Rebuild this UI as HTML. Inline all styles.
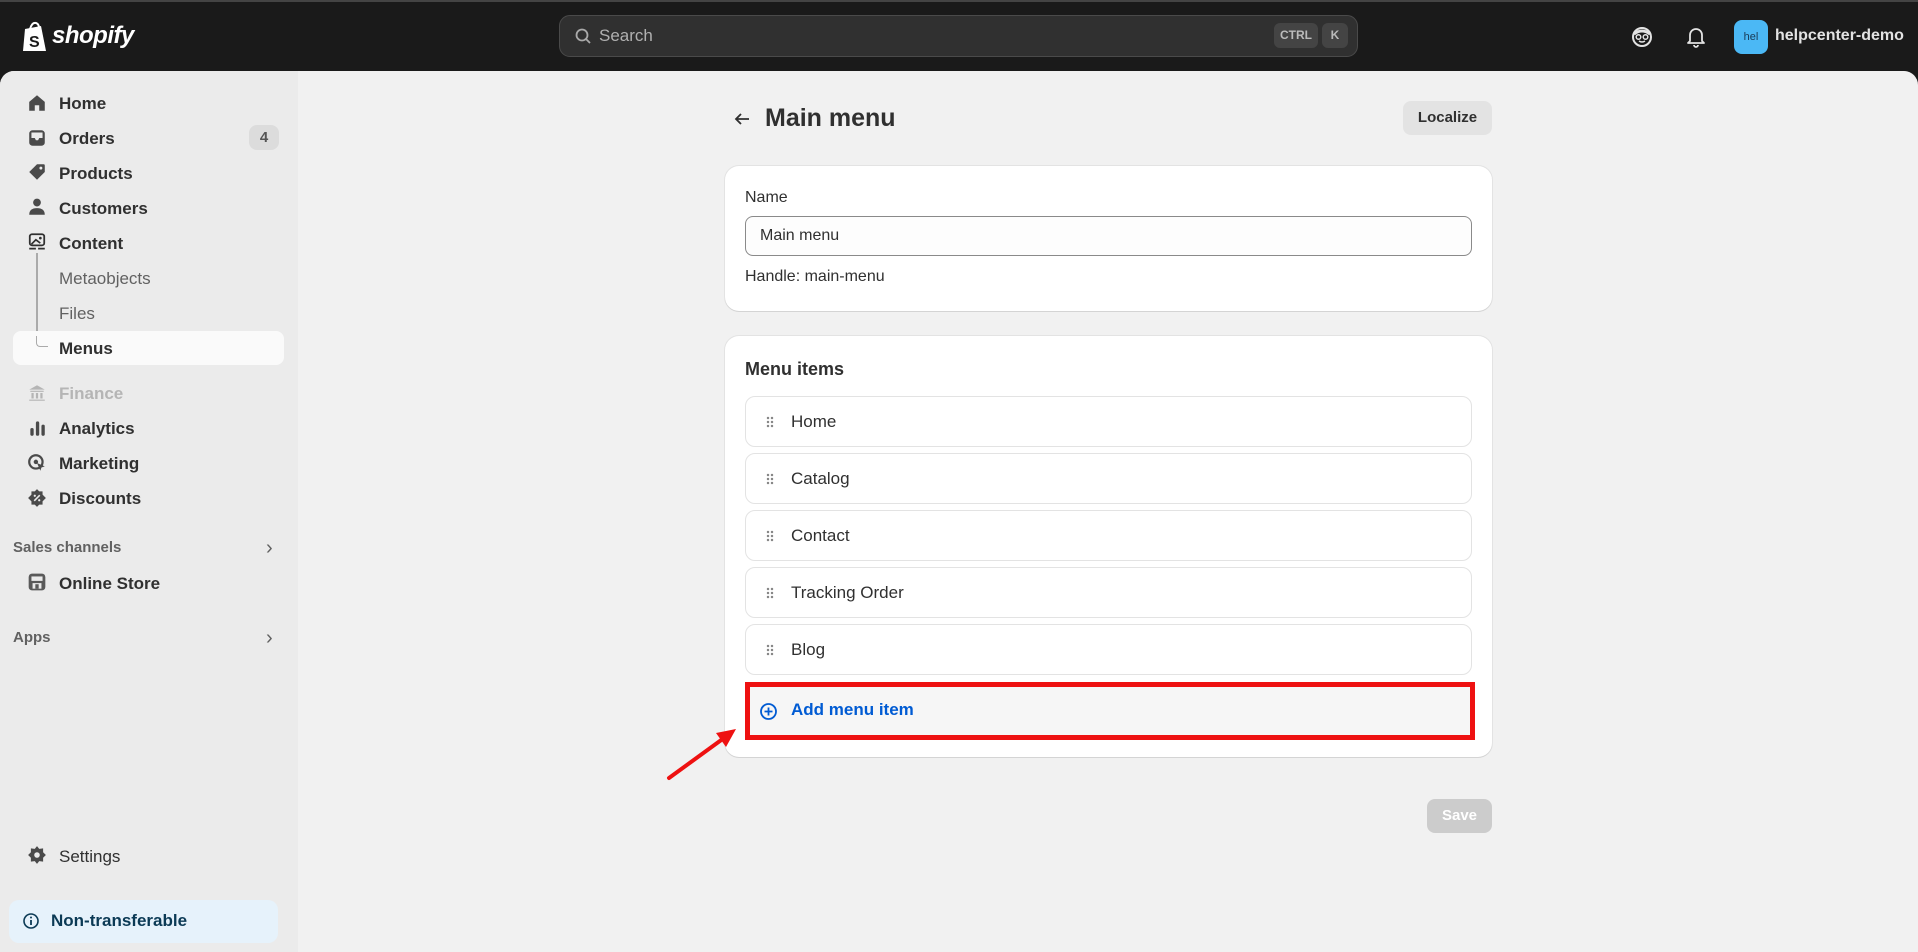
<!DOCTYPE html>
<html><head><meta charset="utf-8"><style>
*{box-sizing:border-box;margin:0;padding:0}
body{width:1918px;height:952px;overflow:hidden;background:#1a1a1a;font-family:"Liberation Sans",sans-serif;color:#303030;position:relative}
.top{position:absolute;left:0;top:0;width:1918px;height:71px;background:#1a1a1a;border-top:2px solid #444}
.main{position:absolute;left:0;top:71px;width:1918px;height:881px;background:#f1f1f1;border-radius:14px 14px 0 0}
.side{position:absolute;left:0;top:71px;width:298px;height:881px;background:#ebebeb;border-radius:14px 0 0 0}
.abs{position:absolute}
.nav{position:absolute;left:59px;font-size:17px;font-weight:bold;color:#303030;margin-top:1px}
.ic{position:absolute;left:27px;width:20px;height:20px;margin-top:-1px}
.card{position:absolute;left:725px;width:767px;background:#fff;border-radius:14px;box-shadow:0 1px 0 #d4d4d4,0 0 0 1px #e3e3e3}
.row{position:absolute;left:20px;width:727px;height:51px;border:1px solid #e3e3e3;border-radius:10px;background:#fff}
.row span{position:absolute;left:45px;top:15px;font-size:17px;color:#303030}
.dots{position:absolute;left:20px;top:19px;width:8px;height:12px;background:radial-gradient(circle,#888 1.1px,transparent 1.4px) 0 0/4px 4px}
</style></head><body>
<div class="top">
 <svg class="abs" style="left:22px;top:19px" width="28" height="32" viewBox="0 0 28 32"><path d="M3 8 L19 5 L24 30 L1 30 Z" fill="#fff"/><path d="M8 8 Q10 1 14 2 Q17 3 17 7" fill="none" stroke="#fff" stroke-width="2"/><text x="7" y="26" font-size="16" font-weight="bold" fill="#1a1a1a" font-family="Liberation Sans">S</text></svg>
 <div class="abs" style="left:52px;top:20px;color:#fff;font-size:24px;font-weight:bold;font-style:italic;letter-spacing:-0.5px">shopify</div>
 <div class="abs" style="left:559px;top:13px;width:799px;height:42px;background:#303030;border:1px solid #4a4a4a;border-radius:11px">
  <svg class="abs" style="left:14px;top:11px" width="18" height="18" viewBox="0 0 18 18"><circle cx="8" cy="8" r="5.5" fill="none" stroke="#aaa" stroke-width="1.8"/><path d="M12 12 L16 16" stroke="#aaa" stroke-width="1.8"/></svg>
  <div class="abs" style="left:39px;top:10px;color:#b0b0b0;font-size:17px">Search</div>
  <div class="abs" style="left:714px;top:7px;width:44px;height:25px;background:#444;border-radius:6px;color:#bbb;font-size:12px;font-weight:bold;text-align:center;line-height:25px">CTRL</div>
  <div class="abs" style="left:762px;top:7px;width:26px;height:25px;background:#444;border-radius:6px;color:#bbb;font-size:12px;font-weight:bold;text-align:center;line-height:25px">K</div>
 </div>
 <svg class="abs" style="left:1631px;top:24px" width="22" height="22" viewBox="0 0 22 22"><circle cx="11" cy="11" r="9" fill="none" stroke="#e3e3e3" stroke-width="2"/><path d="M3 8 Q11 2 19 8" stroke="#e3e3e3" stroke-width="3" fill="none"/><circle cx="7.5" cy="11" r="2.3" fill="none" stroke="#e3e3e3" stroke-width="1.5"/><circle cx="14.5" cy="11" r="2.3" fill="none" stroke="#e3e3e3" stroke-width="1.5"/><path d="M8 15 Q11 17 14 15" stroke="#e3e3e3" stroke-width="1.5" fill="none"/></svg>
 <svg class="abs" style="left:1686px;top:24px" width="20" height="22" viewBox="0 0 20 22"><path d="M4 15 V9 a6 6 0 0 1 12 0 V15 L18 17 H2 Z" fill="none" stroke="#e3e3e3" stroke-width="1.8" stroke-linejoin="round"/><path d="M8 19 a2 2 0 0 0 4 0" fill="none" stroke="#e3e3e3" stroke-width="1.8"/></svg>
 <div class="abs" style="left:1734px;top:18px;width:34px;height:34px;background:#4bb8f5;border-radius:8px;color:#1a3a55;font-size:11px;text-align:center;line-height:34px">hel</div>
 <div class="abs" style="left:1775px;top:25px;color:#e3e3e3;font-size:16px;font-weight:bold">helpcenter-demo</div>
</div>
<div class="main"></div>
<div class="side"></div>

<svg class="ic" style="top:94px" viewBox="0 0 18 18"><path d="M2 8 L9 2 L16 8 V16 H11 V11 H7 V16 H2 Z" fill="#4a4a4a"/></svg>
<div class="nav" style="top:93px">Home</div>
<svg class="ic" style="top:129px" viewBox="0 0 18 18"><rect x="2" y="2" width="14" height="14" rx="3" fill="#4a4a4a"/><path d="M4 4 H14 V9 H11 L10 11 H8 L7 9 H4Z" fill="#ebebeb"/></svg>
<div class="nav" style="top:128px">Orders</div>
<div class="abs" style="left:249px;top:125px;width:30px;height:25px;background:#dcdcdc;border-radius:8px;text-align:center;line-height:25px;font-size:15px;color:#555;font-weight:bold">4</div>
<svg class="ic" style="top:163px" viewBox="0 0 18 18"><path d="M9 2 H15 a1 1 0 0 1 1 1 V9 L9 16 L2 9 Z" fill="#4a4a4a"/><circle cx="12.5" cy="5.5" r="1.3" fill="#ebebeb"/></svg>
<div class="nav" style="top:163px">Products</div>
<svg class="ic" style="top:198px" viewBox="0 0 18 18"><circle cx="9" cy="5" r="3.5" fill="#4a4a4a"/><path d="M2 16 Q2 10 9 10 Q16 10 16 16 Z" fill="#4a4a4a"/></svg>
<div class="nav" style="top:198px">Customers</div>
<svg class="ic" style="top:233px" viewBox="0 0 18 18"><rect x="2.5" y="2" width="13" height="10" rx="2" fill="none" stroke="#303030" stroke-width="1.6"/><path d="M4 11 L8 7 L12 10" stroke="#303030" stroke-width="1.5" fill="none"/><circle cx="12" cy="5.5" r="1.2" fill="#303030"/><path d="M2 15 H8 M10 15 H16" stroke="#303030" stroke-width="1.6"/></svg>
<div class="nav" style="top:233px">Content</div>
<div class="abs" style="left:36px;top:253px;width:1.5px;height:94px;background:#aaa"></div>
<div class="abs" style="left:13px;top:331px;width:271px;height:34px;background:#fafafa;border-radius:8px"></div>
<div class="abs" style="left:36px;top:336px;width:12px;height:11px;border-left:1.5px solid #aaa;border-bottom:1.5px solid #aaa;border-radius:0 0 0 4px"></div>
<div class="nav" style="top:268px;font-weight:normal;color:#616161">Metaobjects</div>
<div class="nav" style="top:303px;font-weight:normal;color:#616161">Files</div>
<div class="nav" style="top:338px">Menus</div>
<svg class="ic" style="top:384px" viewBox="0 0 18 18"><path d="M2 6 L9 2 L16 6 Z M3 7 H15 V8 H3Z M4 9 H6 V14 H4Z M8 9 H10 V14 H8Z M12 9 H14 V14 H12Z M2 15 H16 V16 H2Z" fill="#b5b5b5"/></svg>
<div class="nav" style="top:383px;color:#b5b5b5">Finance</div>
<svg class="ic" style="top:419px" viewBox="0 0 18 18"><rect x="3" y="9" width="3" height="7" rx="1.5" fill="#4a4a4a"/><rect x="8" y="3" width="3" height="13" rx="1.5" fill="#4a4a4a"/><rect x="13" y="6" width="3" height="10" rx="1.5" fill="#4a4a4a"/></svg>
<div class="nav" style="top:418px">Analytics</div>
<svg class="ic" style="top:454px" viewBox="0 0 18 18"><circle cx="8" cy="8" r="6" fill="none" stroke="#4a4a4a" stroke-width="2"/><circle cx="8" cy="8" r="2" fill="#4a4a4a"/><path d="M9 9 L16 12 L13 13 L12 16 Z" fill="#4a4a4a"/></svg>
<div class="nav" style="top:453px">Marketing</div>
<svg class="ic" style="top:489px" viewBox="0 0 18 18"><path d="M9 1 L11 3 L14 3 L14 6 L17 9 L14 12 L14 15 L11 15 L9 17 L7 15 L4 15 L4 12 L1 9 L4 6 L4 3 L7 3Z" fill="#4a4a4a"/><path d="M6.5 11.5 L11.5 6.5" stroke="#ebebeb" stroke-width="1.4"/><circle cx="7" cy="7" r="1" fill="#ebebeb"/><circle cx="11" cy="11" r="1" fill="#ebebeb"/></svg>
<div class="nav" style="top:488px">Discounts</div>
<div class="abs" style="left:13px;top:539px;font-size:15px;font-weight:bold;color:#616161">Sales channels</div>
<div class="abs" style="left:266px;top:537px;font-size:20px;color:#616161">›</div>
<svg class="ic" style="top:573px" viewBox="0 0 18 18"><rect x="1.5" y="1.5" width="15" height="15" rx="3" fill="#5a5a5a"/><rect x="4" y="4" width="10" height="4" fill="#ebebeb"/><rect x="5" y="10" width="8" height="5" fill="#ebebeb"/><rect x="7.5" y="11" width="3" height="4" fill="#5a5a5a"/></svg>
<div class="nav" style="top:573px">Online Store</div>
<div class="abs" style="left:13px;top:629px;font-size:15px;font-weight:bold;color:#616161">Apps</div>
<div class="abs" style="left:266px;top:627px;font-size:20px;color:#616161">›</div>
<svg class="ic" style="top:846px" viewBox="0 0 18 18"><path d="M9 1 L11 3.5 L14.5 3 L14.5 6.5 L17 9 L14.5 11.5 L14.5 15 L11 14.5 L9 17 L7 14.5 L3.5 15 L3.5 11.5 L1 9 L3.5 6.5 L3.5 3 L7 3.5Z" fill="#4a4a4a"/><circle cx="9" cy="9" r="2.5" fill="#ebebeb"/></svg>
<div class="nav" style="top:846px;font-weight:normal">Settings</div>
<div class="abs" style="left:9px;top:900px;width:269px;height:43px;background:#e6f2fb;border-radius:10px"></div>
<svg class="abs" style="left:22px;top:912px" width="18" height="18" viewBox="0 0 18 18"><circle cx="9" cy="9" r="7" fill="none" stroke="#0b3a55" stroke-width="1.6"/><circle cx="9" cy="5.5" r="1" fill="#0b3a55"/><path d="M9 8 V13" stroke="#0b3a55" stroke-width="1.8"/></svg>
<div class="abs" style="left:51px;top:911px;font-size:17px;font-weight:bold;color:#0b3a55">Non-transferable</div>

<svg class="abs" style="left:732px;top:109px" width="20" height="20" viewBox="0 0 20 20"><path d="M17 10 H4 M9 5 L4 10 L9 15" stroke="#303030" stroke-width="1.8" fill="none"/></svg>
<div class="abs" style="left:765px;top:104px;font-size:25px;font-weight:bold;color:#303030">Main menu</div>
<div class="abs" style="left:1403px;top:101px;width:89px;height:34px;background:#e3e3e3;border-radius:8px;font-size:15px;font-weight:bold;text-align:center;line-height:34px;color:#303030">Localize</div>

<div class="card" style="top:166px;height:145px">
 <div class="abs" style="left:20px;top:23px;font-size:16px">Name</div>
 <div class="abs" style="left:20px;top:50px;width:727px;height:40px;border:1px solid #8a8a8a;border-radius:8px;background:#fdfdfd;font-size:16px;padding:10px 14px">Main menu</div>
 <div class="abs" style="left:20px;top:102px;font-size:16px">Handle: main-menu</div>
</div>

<div class="card" style="top:336px;height:421px">
 <div class="abs" style="left:20px;top:23px;font-size:18px;font-weight:bold">Menu items</div>
 <div class="row" style="top:60px"><div class="dots"></div><span>Home</span></div>
 <div class="row" style="top:117px"><div class="dots"></div><span>Catalog</span></div>
 <div class="row" style="top:174px"><div class="dots"></div><span>Contact</span></div>
 <div class="row" style="top:231px"><div class="dots"></div><span>Tracking Order</span></div>
 <div class="row" style="top:288px"><div class="dots"></div><span>Blog</span></div>
 <div class="abs" style="left:20px;top:346px;width:730px;height:58px;background:#f6f6f6;border:5px solid #ee1111"></div>
 <svg class="abs" style="left:34px;top:366px" width="19" height="19" viewBox="0 0 19 19"><circle cx="9.5" cy="9.5" r="7.5" fill="none" stroke="#005bd3" stroke-width="1.8"/><path d="M9.5 5.5 V13.5 M5.5 9.5 H13.5" stroke="#005bd3" stroke-width="1.8"/></svg>
 <div class="abs" style="left:66px;top:364px;font-size:17px;font-weight:bold;color:#005bd3">Add menu item</div>
</div>

<div class="abs" style="left:1427px;top:799px;width:65px;height:34px;background:#cccccc;border-radius:8px;color:#fff;font-size:15px;font-weight:bold;text-align:center;line-height:34px">Save</div>

<svg class="abs" style="left:660px;top:720px" width="90" height="70" viewBox="0 0 90 70"><path d="M9 58 L64 18" stroke="#ee1111" stroke-width="4" stroke-linecap="round"/><path d="M76 9 L56 13 L66 27 Z" fill="#ee1111"/></svg>
</body></html>
